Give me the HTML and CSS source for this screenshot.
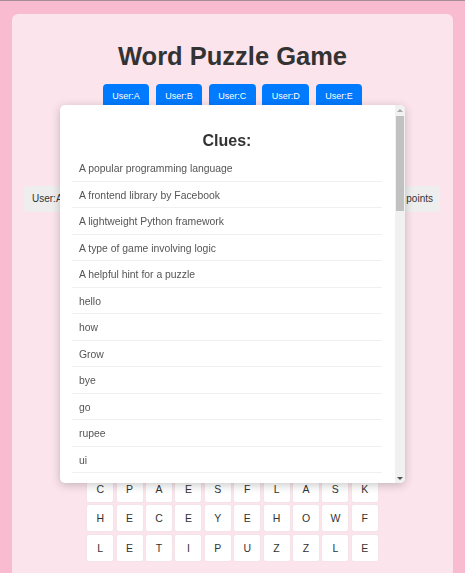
FILE: index.html
```html
<!DOCTYPE html>
<html lang="en">
<head>
<meta charset="utf-8">
<title>Word Puzzle Game</title>
<link rel="stylesheet" href="styles.css">
</head>
<body>
<div class="container">
  <h1 class="title">Word Puzzle Game</h1>
  <div class="users">
    <button class="user-btn">User:A</button>
    <button class="user-btn">User:B</button>
    <button class="user-btn">User:C</button>
    <button class="user-btn">User:D</button>
    <button class="user-btn">User:E</button>
  </div>
  <div class="score">
    <span>User:A</span>
    <span>0 points</span>
  </div>
  <div class="grid">
    <div class="cell">C</div><div class="cell">P</div><div class="cell">A</div><div class="cell">E</div><div class="cell">S</div><div class="cell">F</div><div class="cell">L</div><div class="cell">A</div><div class="cell">S</div><div class="cell">K</div>
    <div class="cell">H</div><div class="cell">E</div><div class="cell">C</div><div class="cell">E</div><div class="cell">Y</div><div class="cell">E</div><div class="cell">H</div><div class="cell">O</div><div class="cell">W</div><div class="cell">F</div>
    <div class="cell">L</div><div class="cell">E</div><div class="cell">T</div><div class="cell">I</div><div class="cell">P</div><div class="cell">U</div><div class="cell">Z</div><div class="cell">Z</div><div class="cell">L</div><div class="cell">E</div>
  </div>
</div>

<div class="modal">
  <div class="modal-body">
    <h3 class="modal-title">Clues:</h3>
    <ul class="clues">
      <li>A popular programming language</li>
      <li>A frontend library by Facebook</li>
      <li>A lightweight Python framework</li>
      <li>A type of game involving logic</li>
      <li>A helpful hint for a puzzle</li>
      <li>hello</li>
      <li>how</li>
      <li>Grow</li>
      <li>bye</li>
      <li>go</li>
      <li>rupee</li>
      <li>ui</li>
    </ul>
  </div>
  <div class="scrollbar">
    <div class="sb-btn"><span class="sb-up"></span></div>
    <div class="sb-track"><div class="sb-thumb"></div></div>
    <div class="sb-btn"><span class="sb-down"></span></div>
  </div>
</div>
</body>
</html>
```

FILE: styles.css
```css
* {
  box-sizing: border-box;
}

html, body {
  margin: 0;
  padding: 0;
  overflow: hidden;
}

body {
  background: #f8bbd0;
  font-family: "Liberation Sans", Arial, sans-serif;
  color: #333;
  padding: 13px 12px 0;
  border-top: 1px solid #a58f97;
  height: 573px;
}

.container {
  background: #fce4ec;
  border-radius: 6px;
  padding: 12px;
  height: 600px;
}

.title {
  margin: 15px 0 0;
  font-size: 25.5px;
  line-height: 30px;
  font-weight: bold;
  text-align: center;
  color: #333;
}

.users {
  display: flex;
  justify-content: center;
  gap: 6.5px;
  margin-top: 13px;
}

.user-btn {
  border: 0;
  background: #007bff;
  color: #fff;
  font-family: "Liberation Sans", Arial, sans-serif;
  font-size: 9px;
  line-height: 12px;
  padding: 6px 9.5px;
  border-radius: 4px;
}

.score {
  display: flex;
  justify-content: space-between;
  margin-top: 78px;
  background: #eeeeee;
  border-radius: 4px;
  padding: 7px 7px 7px 8px;
  font-size: 10px;
  line-height: 12px;
  color: #333;
  margin-right: 1px;
}

.grid {
  display: grid;
  grid-template-columns: repeat(10, 26px);
  grid-auto-rows: 26px;
  gap: 3.4px;
  justify-content: center;
  margin-top: 264px;
}

.cell {
  display: flex;
  align-items: center;
  justify-content: center;
  background: #fff;
  border-radius: 2px;
  box-shadow: 0 0 0 1px #f4e3e8;
  font-size: 10.5px;
  color: #333;
}

.modal {
  position: fixed;
  top: 105px;
  left: 60px;
  width: 345px;
  height: 378px;
  overflow: hidden;
  background: #fff;
  border-radius: 5px;
  box-shadow: 0 2px 10px rgba(0, 0, 0, 0.22);
  display: flex;
}

.modal-body {
  flex: 1;
  padding: 12px 13px 12px 12px;
  overflow: hidden;
}

.scrollbar {
  width: 10px;
  background: #f1f1f1;
  display: flex;
  flex-direction: column;
}

.sb-btn {
  height: 10px;
  display: flex;
  align-items: center;
  justify-content: center;
}

.sb-up {
  width: 0;
  height: 0;
  border-left: 3px solid transparent;
  border-right: 3px solid transparent;
  border-bottom: 3px solid #a8a8a8;
}

.sb-down {
  width: 0;
  height: 0;
  border-left: 3px solid transparent;
  border-right: 3px solid transparent;
  border-top: 3px solid #505050;
}

.sb-track {
  flex: 1;
  padding: 1px 1px 0;
}

.sb-thumb {
  height: 95px;
  background: #c1c1c1;
}

.modal-title {
  margin: 14px 0 4px;
  font-size: 16px;
  line-height: 20px;
  font-weight: bold;
  text-align: center;
  color: #333;
}

.clues {
  list-style: none;
  margin: 0;
  padding: 0;
}

.clues li {
  padding: 8px 7px 6px;
  font-size: 10.4px;
  line-height: 11.5px;
  color: #555;
  border-bottom: 1px solid #f0f0f0;
}
```
